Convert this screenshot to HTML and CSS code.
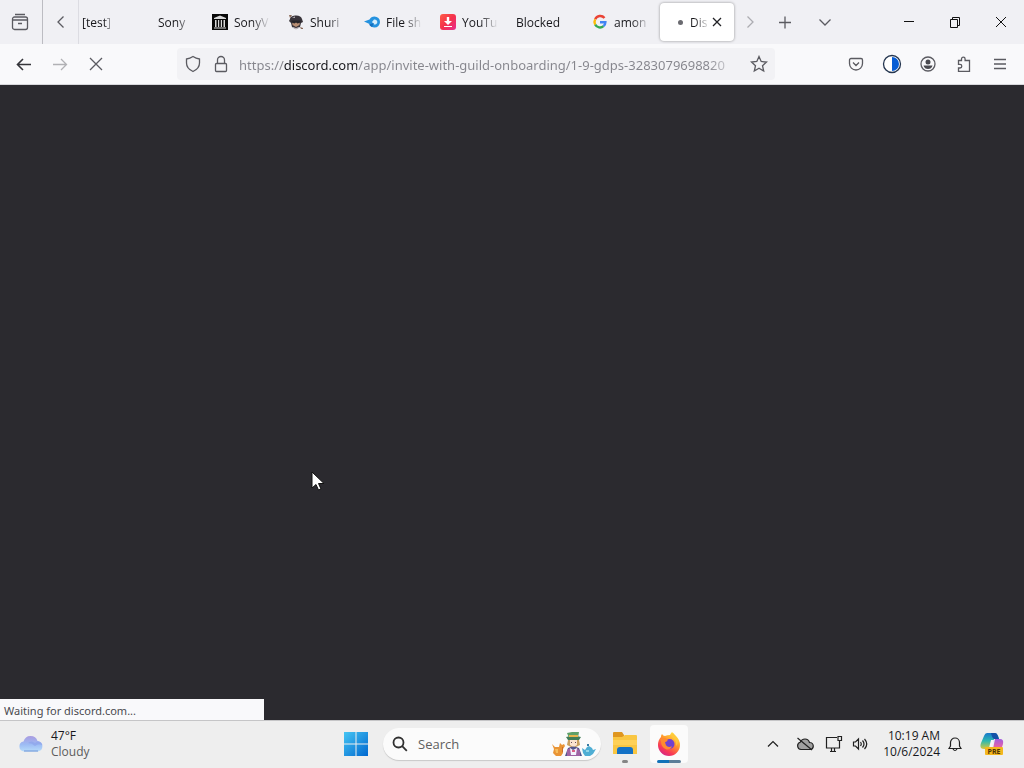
FILE: index.html
```
<!DOCTYPE html>
<html lang="en">
  <head>
    <meta charset="UTF-8" />
    <meta name="viewport" content="width=device-width, initial-scale=1.0" />
    <title>Discord</title>
    <link rel="stylesheet" href="styles.css">
  </head>
  <body>
    <header class="tab-strip">
      <button class="view-btn" aria-label="Recent browsing">
        <svg width="18" height="18" viewBox="0 0 18 18"><path d="M4 1.500h10M1.500 7V6a2 2 0 0 1 2-2h11a2 2 0 0 1 2 2v1M1.500 7h15v7.500a2 2 0 0 1-2 2h-11a2 2 0 0 1-2-2zM7 10.500h4" /></svg>
      </button>
      <button class="scroll-btn" aria-label="Scroll tabs left">
        <svg width="16" height="16" viewBox="0 0 16 16"><path d="M10.500 2.500L5 8l5.500 5.500" /></svg>
      </button>
      <nav class="tabs">
        <button class="tab tab-cut"><span class="label">[test]</span></button>
        <button class="tab"><span class="favicon"></span><span class="label">Sony</span></button>
        <button class="tab">
          <svg class="favicon" viewBox="0 0 16 16"><path fill="#080808" d="M0 0h16v16H0z" /><path fill="#d8d8d8" d="M2 4l6-2.500L14 4v1H2zM3 6h1.500v7H3zM6 6h1.200v7H6zM8.800 6H10v7H8.800zM11.500 6H13v7h-1.500zM2 13.500h12v1H2z" /></svg>
          <span class="label">SonyV</span>
        </button>
        <button class="tab">
          <svg class="favicon" viewBox="0 0 16 16"><path fill="#39343a" d="M2 5q0-3 5-3.500Q13 1 14 5l1 3-2 1-1 4-4 2-4-2-1-4-2-2z" /><path fill="#b98f74" d="M4 7l4 1 4-1-.5 4L8 13l-3.500-2z" /><path fill="#252329" d="M3.500 6.500h9v2l-3 1-1.500-1-1.500 1-3-1z" /><path fill="#bbb5bb" d="M4 3.500l3-1v1.500zM5 13l3 1 3-1v1l-3 1.500-3-1.500z" /><path fill="#8a6a58" d="M1 1h3L2 4zM12 13l3 1v1h-2z" /></svg>
          <span class="label">Shuri</span>
        </button>
        <button class="tab">
          <svg class="favicon" viewBox="0 0 16 16"><path fill="#2592df" d="M0 7.500l5.500-2Q7 2.500 10.500 2.500a5.500 5.500 0 0 1 0 11Q7 13.500 5.500 10z" /><path fill="#d5edfb" d="M8 8l2-2.500a2.600 2.600 0 1 1 0 5z" /><path fill="#1670bf" d="M5 10.500l5-1.500-2 4q-2-.7-3-2.500z" /></svg>
          <span class="label">File sh</span>
        </button>
        <button class="tab">
          <svg class="favicon" viewBox="0 0 16 16"><defs><linearGradient id="yt" x2="1" y2="1"><stop stop-color="#ff5d47" /><stop offset=".5" stop-color="#f4324b" /><stop offset="1" stop-color="#e72b91" /></linearGradient></defs><rect width="16" height="16" rx="3" fill="url(#yt)" /><path fill="#fff" d="M6.800 3h2.400v4H12l-4 4-4-4h2.800zM4 12h8v1H4z" /></svg>
          <span class="label">YouTu</span>
        </button>
        <button class="tab"><span class="label">Blocked</span></button>
        <button class="tab">
          <svg class="favicon" viewBox="0 0 16 16"><g fill="none" stroke-width="2.400"><path stroke="#ea4335" d="M12.500 4A5.500 5.500 0 0 0 3.200 5.300" /><path stroke="#fbbc05" d="M3.200 5.300a5.500 5.500 0 0 0 0 5.400" /><path stroke="#34a853" d="M3.200 10.700a5.500 5.500 0 0 0 8.300 1.500" /><path stroke="#4285f4" d="M11.500 12.200A5.500 5.500 0 0 0 13.400 8.200H8" /></g></svg>
          <span class="label">amon</span>
        </button>
        <div class="tab tab-active">
          <span class="spinner"></span><span class="label">Dis</span>
          <button class="tab-close" aria-label="Close tab">
            <svg width="10" height="10" viewBox="0 0 10 10"><path d="M1 1l8 8M9 1L1 9" /></svg>
          </button>
        </div>
      </nav>
      <button class="scroll-btn scroll-right dim" aria-label="Scroll tabs right">
        <svg width="16" height="16" viewBox="0 0 16 16"><path d="M5.500 2.500L11 8l-5.500 5.500" /></svg>
      </button>
      <button class="strip-btn" aria-label="New tab">
        <svg width="16" height="16" viewBox="0 0 16 16"><path d="M8 2.500v12M2 8.500h12" /></svg>
      </button>
      <button class="strip-btn" aria-label="List all tabs">
        <svg width="16" height="16" viewBox="0 0 16 16"><path d="M2.500 5.500L8 11l5.500-5.500" /></svg>
      </button>
      <div class="window-controls">
        <button aria-label="Minimize"><svg width="12" height="12" viewBox="0 0 12 12"><path d="M1 5.500h10" /></svg></button>
        <button aria-label="Restore"><svg width="12" height="12" viewBox="0 0 12 12"><path d="M1.500 3.500h7v8h-7zM3.500 3.500v-2h7v8h-2" /></svg></button>
        <button aria-label="Close"><svg width="12" height="12" viewBox="0 0 12 12"><path d="M1 1l10 10M11 1L1 11" /></svg></button>
      </div>
    </header>

    <div class="toolbar">
      <div class="tool-group">
        <button aria-label="Back"><svg width="16" height="16" viewBox="0 0 16 16"><path class="bold" d="M15 8.500H2M7 3L1.500 8.500 7 14" /></svg></button>
        <button class="dim" aria-label="Forward"><svg width="16" height="16" viewBox="0 0 16 16"><path d="M1 8.500h13M9 3l5.500 5.500L9 14" /></svg></button>
        <button aria-label="Stop"><svg width="16" height="16" viewBox="0 0 16 16"><path d="M2 2l12 12M14 2L2 14" /></svg></button>
      </div>
      <form class="urlbar">
        <svg width="16" height="18" viewBox="0 0 16 18"><path d="M8 1.500Q11 3.500 14.500 4v4q0 5.500-6.500 8.500Q1.500 13.500 1.500 8V4Q5 3.500 8 1.500z" /></svg>
        <svg width="16" height="18" viewBox="0 0 16 18"><path d="M4.500 8V5a3.500 3.500 0 0 1 7 0v3M3.500 8.500h9a1 1 0 0 1 1 1v6a1 1 0 0 1-1 1h-9a1 1 0 0 1-1-1v-6a1 1 0 0 1 1-1z" /></svg>
        <input type="text" aria-label="Address" value="https://discord.com/app/invite-with-guild-onboarding/1-9-gdps-3283079698820" />
        <button type="button" aria-label="Bookmark this page">
          <svg width="18" height="18" viewBox="0 0 18 18"><path d="M9 1.500l2.200 5 5.300.5-4 3.700 1.200 5.300L9 13.300 4.300 16l1.200-5.300-4-3.700 5.300-.5z" /></svg>
        </button>
      </form>
      <div class="tool-group">
        <button aria-label="Save to Pocket"><svg width="16" height="16" viewBox="0 0 16 16"><path d="M3 2.500h10a1.500 1.500 0 0 1 1.500 1.500v3.500a6.500 6.500 0 0 1-13 0V4A1.500 1.500 0 0 1 3 2.500zM5 6.500l3 3 3-3" /></svg></button>
        <button aria-label="Dark mode"><svg width="20" height="20" viewBox="0 0 20 20"><circle cx="10" cy="10" r="8.500" fill="#fff" stroke="#24354f" /><path fill="#075dd5" stroke="none" d="M10 3a7 7 0 0 1 0 14z" /></svg></button>
        <button aria-label="Account"><svg width="16" height="16" viewBox="0 0 16 16"><circle cx="8" cy="8" r="7" /><circle cx="8" cy="6" r="2.500" fill="#4a4a50" stroke="none" /><path fill="#4a4a50" stroke="none" d="M3.500 9.500h9Q11.500 13 8 13T3.500 9.500z" /></svg></button>
        <button aria-label="Extensions"><svg width="16" height="16" viewBox="0 0 16 16"><path d="M2.500 4.500h3V3a1.800 1.800 0 0 1 3.600 0v1.500h4.400v11h-11V12H4a1.800 1.800 0 0 0 0-3.600H2.500z" /></svg></button>
        <button aria-label="Menu"><svg width="16" height="16" viewBox="0 0 16 16"><path d="M2 3.500h12M2 8h12M2 12.500h12" /></svg></button>
      </div>
    </div>

    <main class="page">
      <svg class="cursor" width="14" height="21" viewBox="0 0 14 21"><path d="M1 1v16l4-3.500 2.500 5.500 2.500-1-2.500-5.500H13z" /></svg>
      <div class="status">Waiting for discord.com...</div>
    </main>

    <footer class="taskbar">
      <button class="weather">
        <svg width="26" height="18" viewBox="0 0 26 18"><defs><linearGradient id="cloud" x2="0" y2="1"><stop stop-color="#a99be0" /><stop offset=".55" stop-color="#9dbcf4" /><stop offset="1" stop-color="#b7dcfa" /></linearGradient></defs><path fill="url(#cloud)" d="M6 16.500a5 5 0 0 1-.5-9.900Q7 1 12.500 1T19.500 6A5.300 5.300 0 0 1 20 16.500z" /><path fill="#8ba0e9" opacity=".6" d="M10 8q3-3 7 0l3-1.800q4 1 4.500 4-4-2-7.500.8-3-3-7-3z" /><path stroke="#6f93d5" d="M6 16h14" /></svg>
        <span><b>47°F</b><small>Cloudy</small></span>
      </button>
      <div class="apps">
        <button aria-label="Start"><svg width="24" height="24" viewBox="0 0 24 24"><defs><linearGradient id="win" x2="1" y2="1"><stop stop-color="#45c5f3" /><stop offset="1" stop-color="#0067cf" /></linearGradient></defs><path fill="url(#win)" d="M0 0h11.500v11.500H0zM12.500 0H24v11.500H12.500zM0 12.500h11.500V24H0zM12.500 12.500H24V24H12.500z" /></svg></button>
        <form class="search">
          <svg class="lens" width="16" height="16" viewBox="0 0 16 16"><circle cx="6.500" cy="6.500" r="5" /><path d="M10.200 10.200l4.600 4.600" /></svg>
          <input type="search" placeholder="Search" aria-label="Search" />
          <svg width="44" height="26" viewBox="0 0 44 26">
            <path fill="#e99435" d="M0 13l3 3h4l1-4 2 2 2-1 1 2-2 3v4l-2 3H4l-3-3 1-4z" /><path fill="#f7bd5c" d="M3 18h3v4H4z" /><path fill="none" stroke="#c96e2c" d="M10.500 16v5" />
            <path fill="#5fa069" d="M15 2l5-1h7l-1 6h-9z" /><path fill="#417d58" d="M14 6q8-2 15 0l-2 3H16z" /><path fill="#e6b54c" d="M17 4h9v2h-9z" />
            <path fill="#c9a05f" d="M16 9h11l1 5-4 2h-5l-4-2z" /><path fill="#fbe3cf" d="M18 9h7v5l-3 2h-1l-3-2z" /><path fill="#69505d" d="M19 11h1v1h-1zM23 11h1v1h-1z" />
            <path fill="#52558c" d="M16 17q5-3 11 0l3 8H13z" /><path fill="#9e63a4" d="M15 19l3-2 3 3 4-3 3 3v5H15z" /><path fill="#f3f2fd" d="M18 17l3 2 4-2-1 7h-5z" /><path fill="#da5f88" d="M20 19h3v2h-3z" />
            <path fill="#4faed4" d="M30 17l3 2 2-3 2-1 3 2 1 2 3-1-3 5-3 2h-5l-2-3z" /><path fill="#92d5e7" d="M34 19h3v2h-3z" /><path fill="#397ca4" d="M35 13h2v2h-2z" />
          </svg>
        </form>
        <button class="app" aria-label="File Explorer">
          <svg width="26" height="24" viewBox="0 0 26 24"><path fill="#df961f" d="M1 1q0-1 1-1h8l2 3v4H1z" /><path fill="#f9c642" d="M1 5h9l3-2h11q1 0 1 1v18H1z" /><path fill="#ffd157" d="M1 8h24v5H1z" /><path fill="#1472c6" d="M5 22v-4q0-3 3-3h10q3 0 3 3v4z" /></svg>
        </button>
        <button class="app app-current" aria-label="Firefox">
          <svg width="24" height="24" viewBox="0 0 24 24"><defs><linearGradient id="fox" x1=".8" y1="0" x2=".2" y2="1"><stop stop-color="#fff04b" /><stop offset=".4" stop-color="#ff992c" /><stop offset=".75" stop-color="#f93856" /><stop offset="1" stop-color="#cc2390" /></linearGradient></defs><path fill="url(#fox)" d="M4 5q0-2 1-3 1 2 3 2 2-1 5-1 1-2 2-3 2 2 4 4 4 4 4 9a11 11 0 0 1-22 0q0-5 3-8z" /><circle cx="12.500" cy="12" r="5" fill="#7141ce" /><path fill="#ff8a2e" d="M3 7l5-1 3 1.500-1 1.700-2 1 1 3q2 3 6 1-2 4-6 3-5-2-5-8z" /><path fill="#ffc83b" d="M16 6q4 3 3 8 3-3 1-8l-4-5q-3 3 0 5z" /></svg>
        </button>
      </div>
      <div class="tray">
        <button aria-label="Show hidden icons"><svg width="12" height="12" viewBox="0 0 12 12"><path d="M1 8.500l5-5 5 5" /></svg></button>
        <button aria-label="OneDrive"><svg width="18" height="14" viewBox="0 0 18 14"><path fill="#a0a0a0" d="M5 12.500a3.700 3.700 0 0 1-.8-7.200Q5.500 2 9 2t4.500 3.500a3.500 3.500 0 0 1 .5 7z" /><path d="M1.500 1l14.500 12" /></svg></button>
        <button class="narrow" aria-label="Network"><svg width="18" height="18" viewBox="0 0 18 18"><path d="M12 2.500H1.500v10.500h13V9M5 16.500h6M6.500 13v3.500M9.500 13v3.500M13 1.500h3.500v4H13zM14.500 5.500v4" /></svg></button>
        <button class="narrow" aria-label="Volume"><svg width="16" height="14" viewBox="0 0 16 14"><path d="M1.500 5h2l3-3v10l-3-3h-2zM8.500 5q1.500 2 0 4M10.500 3.500q3 3.500 0 7M12.500 2q4.500 5 0 10" /></svg></button>
        <button class="clock"><time>10:19 AM</time><time>10/6/2024</time></button>
        <button class="bell" aria-label="Notifications"><svg width="14" height="16" viewBox="0 0 14 16"><path d="M2.500 10V6.500a4.500 4.500 0 0 1 9 0V10l1.500 2.500H1zM5 13q2 3 4 0" /></svg></button>
        <button class="copilot" aria-label="Copilot"><svg width="24" height="24" viewBox="0 0 24 24"><defs><linearGradient id="co" x2="0" y2="1"><stop stop-color="#1778cc" /><stop offset=".5" stop-color="#2eb9b0" /><stop offset="1" stop-color="#d8c73d" /></linearGradient><linearGradient id="pi" x2="0" y2="1"><stop stop-color="#a15de0" /><stop offset=".6" stop-color="#eb62a3" /><stop offset="1" stop-color="#f49b50" /></linearGradient></defs><path fill="url(#co)" d="M7 1h8q2 0 3 3l1 3h-5l-3 10H4q-5 0-3-6L4 4q1-3 3-3z" /><path fill="#1452a7" d="M11 1h4q2 0 3 3l1 3h-5q-2-1-3-6z" /><path fill="url(#pi)" d="M15 7h5q4 0 3 5l-3 9H9q3 0 4-4z" /><path fill="#f7f4fa" d="M11 8h3l-2 8H9z" /><rect x="5" y="15" width="18" height="8" rx="1" fill="#f4b71d" /><text x="14" y="22">PRE</text></svg></button>
      </div>
    </footer>
  </body>
</html>
```
FILE: styles.css
```
* {
  box-sizing: border-box;
}
body {
  margin: 0;
  min-height: 100vh;
  display: flex;
  flex-direction: column;
  font-family: "Open Sans", "Noto Sans", sans-serif;
  font-size: 12px;
  line-height: 16px;
  color: #18181c;
}
button,
input {
  font: inherit;
  color: inherit;
  border: 0;
  padding: 0;
  background: none;
}
button {
  display: flex;
  align-items: center;
  justify-content: center;
}
svg {
  display: block;
  flex-shrink: 0;
  fill: none;
}

/* tabs */
.tab-strip {
  display: flex;
  align-items: stretch;
  height: 44px;
  background: #f0f0f4;
}
.tab-strip svg,
.toolbar svg {
  stroke: #5b5b61;
  stroke-width: 1.3;
}
.tab-strip .favicon {
  width: 16px;
  height: 16px;
  flex-shrink: 0;
  margin-right: 6px;
  stroke: none;
}
.view-btn {
  width: 43px;
  padding-right: 2px;
  border-right: 1px solid #bcbcc2;
}
.scroll-btn {
  width: 35px;
}
.scroll-right {
  width: 31px;
}
.dim {
  opacity: 0.45;
}
.tabs {
  display: flex;
  align-items: center;
  border-left: 1px solid #dcdce2;
}
.tab {
  width: 76px;
  height: 38px;
  display: flex;
  align-items: center;
  justify-content: flex-start;
  padding: 0 8px;
  text-align: left;
}
.tab-cut {
  width: 49px;
  padding: 0 10px 0 3px;
}
.label {
  flex: 1;
  min-width: 0;
  padding-top: 2px;
  overflow: hidden;
  white-space: nowrap;
  mask-image: linear-gradient(90deg, #000 18px, transparent 36px);
}
.tab > .label:only-child {
  mask-image: linear-gradient(to left, transparent 4px, #000 14px);
}
.tab-active {
  width: 74px;
  padding: 0 8px 0 18px;
  background: #fff;
  border-radius: 4px;
  box-shadow: 0 0 3px rgba(0, 0, 0, 0.4);
}
.tab-active .label {
  mask-image: linear-gradient(90deg, #000 4px, transparent 20px);
}
.spinner {
  width: 5px;
  height: 5px;
  margin-right: 7px;
  border-radius: 50%;
  background: #6a6a70;
}
.tab-close {
  width: 18px;
  height: 24px;
}
.tab-close svg {
  stroke: #222226;
}
.strip-btn {
  width: 40px;
}
.window-controls {
  display: flex;
  margin-left: auto;
}
.window-controls button {
  width: 46px;
}
.window-controls svg {
  stroke: #111;
  stroke-width: 1;
}

/* toolbar */
.toolbar {
  display: flex;
  align-items: center;
  gap: 63px;
  height: 41px;
  padding: 0 6px;
  background: #f9f9fb;
  border-bottom: 1px solid #d8d8dc;
}
.tool-group {
  display: flex;
}
.tool-group button {
  width: 36px;
  height: 36px;
}
.toolbar .bold {
  stroke: #35353a;
  stroke-width: 1.6;
}
.urlbar {
  flex: 1;
  min-width: 0;
  display: flex;
  align-items: center;
  gap: 12px;
  height: 32px;
  padding: 0 7px 0 8px;
  border-radius: 4px;
  background: #f2f2f5;
}
.urlbar input {
  flex: 1;
  min-width: 0;
  height: 24px;
  margin-left: -2px;
  padding-top: 2px;
  font-family: "Noto Sans", sans-serif;
  font-size: 13px;
  outline: 0;
  /* the host name is darker and the end fades out */
  color: transparent;
  background: linear-gradient(90deg, #85858c 45px, #18181c 45px 118px, #85858c 118px calc(100% - 30px), transparent);
  background-clip: text;
}

/* page */
.page {
  flex: 1;
  position: relative;
  background: #2b2a2f;
}
.cursor {
  position: absolute;
  left: 311px;
  top: 386px;
}
.cursor path {
  fill: #fff;
  stroke: #111;
}
.status {
  position: absolute;
  left: 0;
  bottom: 0;
  width: 264px;
  height: 21px;
  padding: 0 4px;
  font-family: "Noto Sans", sans-serif;
  font-size: 11px;
  line-height: 23px;
  color: #4a4a4f;
  background: #f9f9fb;
}

/* taskbar */
.taskbar {
  display: grid;
  grid-template-columns: 1fr auto 1fr;
  align-items: center;
  height: 48px;
  padding-bottom: 1px;
  background: #eee;
  border-top: 1px solid #c5c5c7;
}
.weather {
  justify-self: start;
  gap: 7px;
  padding-left: 18px;
  text-align: left;
}
.weather b,
.weather small {
  display: block;
  font-size: 12px;
  font-weight: normal;
}
.weather small {
  color: #5c5c5c;
}
.apps {
  display: flex;
  align-items: center;
  padding-left: 2px;
}
.apps button {
  width: 44px;
  height: 44px;
}
.search {
  display: flex;
  align-items: center;
  width: 218px;
  height: 32px;
  margin: 0 3px 0 5px;
  padding: 0 5px 0 9px;
  border-radius: 16px;
  background: #fbfbfb;
  box-shadow: 0 1px 1px #c8c8c8;
}
.search input {
  flex: 1;
  min-width: 0;
  padding-left: 10px;
  font-size: 13px;
  outline: 0;
}
.search input::placeholder {
  color: #606060;
}
.lens {
  stroke: #303030;
  stroke-width: 1.8;
}
.apps .app {
  position: relative;
  width: 42px;
}
.app::after {
  content: "";
  position: absolute;
  bottom: 3px;
  width: 6px;
  height: 3px;
  border-radius: 2px;
  background: #858585;
}
.apps .app-current {
  width: 38px;
  height: 38px;
  margin: 0 4px;
  border-radius: 4px;
  background: #fbfbfb;
}
.app-current::after {
  bottom: 0;
  width: 24px;
  background: linear-gradient(90deg, #1272b8 12px, #5b7d98 12px);
}
.tray {
  justify-self: end;
  display: flex;
  align-items: center;
  padding-right: 18px;
}
.tray button {
  width: 32px;
  height: 40px;
}
.tray svg {
  stroke: #202020;
  stroke-width: 1.2;
}
.tray .narrow {
  width: 26px;
}
.tray .clock {
  flex-direction: column;
  align-items: flex-end;
  width: auto;
  margin-left: 10px;
}
.tray .bell {
  width: 30px;
}
.tray .copilot {
  width: 36px;
  padding-left: 8px;
}
.tray .copilot svg {
  stroke: none;
}
.copilot text {
  font-size: 7px;
  font-weight: bold;
  text-anchor: middle;
  fill: #4b3205;
}
```
